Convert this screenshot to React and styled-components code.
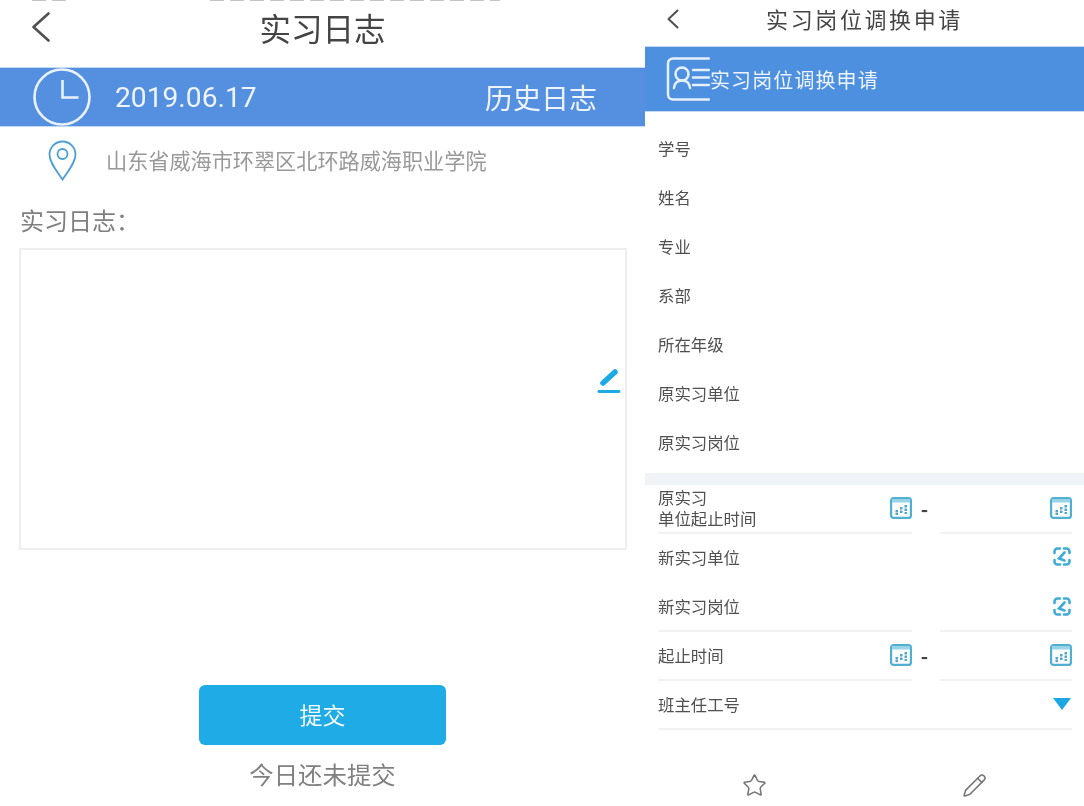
import React from "react";
import styled, { createGlobalStyle } from "styled-components";
import { Star, Pencil } from "lucide-react";

const Global = createGlobalStyle`
  html, body { margin: 0; padding: 0; background: #fff; }
  body { font-family: "Noto Sans CJK SC", "Noto Sans", sans-serif; overflow: hidden; }
`;

const Screen = styled.div`
  width: 1084px;
  height: 806px;
  display: grid;
  grid-template-columns: 645px 439px;
  overflow: hidden;
  filter: blur(0.6px);
`;

const Phone = styled.section`
  display: flex;
  flex-direction: column;
  height: 806px;
  overflow: hidden;
`;

const Header = styled.header`
  position: relative;
  height: ${(p) => p.$h}px;
  display: flex;
  align-items: center;
  justify-content: center;
  color: #444;
  font-size: ${(p) => p.$size}px;
  letter-spacing: ${(p) => p.$spacing || 0}px;
  padding-bottom: ${(p) => p.$lift || 0}px;
  box-sizing: border-box;
`;

const StatusSliver = styled.span`
  position: absolute;
  top: 0;
  left: ${(p) => p.$left}px;
  width: ${(p) => p.$w}px;
  height: 1px;
  background: repeating-linear-gradient(90deg, #c4c4c4 0 14px, #fff 14px 20px);
`;

const Back = styled.span`
  position: absolute;
  left: ${(p) => p.$left}px;
  top: ${(p) => p.$y}px;
  display: flex;
`;

const BlueBand = styled.div`
  height: ${(p) => p.$h}px;
  background: ${(p) => p.$bg};
  border-top: 1px solid #c3d9f3;
  border-bottom: 1px solid #c3d9f3;
  box-sizing: border-box;
  display: flex;
  align-items: center;
  color: #eef4fc;
`;

const DayBand = styled(BlueBand)`
  padding: 0 48px 0 33px;
  font-size: 28px;
  justify-content: space-between;
`;

const DayLeft = styled.div`
  display: flex;
  align-items: center;
  gap: 24px;
`;

const DateText = styled.span`
  font-family: Roboto, "Noto Sans", sans-serif;
  font-size: 28.2px;
`;

const Place = styled.div`
  height: 68px;
  display: flex;
  align-items: center;
  gap: 29px;
  padding: 0 0 2px 48px;
  box-sizing: border-box;
  color: #999;
  font-size: 21.15px;
`;

const PlaceText = styled.span`
  margin-bottom: 2px;
`;

const LogLabel = styled.div`
  margin: 6px 0 0 20px;
  height: 38px;
  line-height: 38px;
  font-size: 24px;
  color: #808080;
`;

const LogBox = styled.div`
  position: relative;
  margin: 9px 18px 0 19px;
  height: 302px;
  box-sizing: border-box;
  border: 2px solid #eeeeee;
  background: #fff;
`;

const EditMark = styled.span`
  position: absolute;
  right: 4px;
  top: 116px;
  display: flex;
`;

const Footer = styled.div`
  margin-top: 135px;
  display: flex;
  flex-direction: column;
  align-items: center;
`;

const Submit = styled.button`
  width: 247px;
  height: 60px;
  border: 0;
  border-radius: 6px;
  background: #1fabe5;
  color: #f4fbff;
  font: inherit;
  font-size: 23px;
  padding: 0 0 2px;
`;

const Status = styled.div`
  margin-top: 11px;
  font-size: 24.4px;
  line-height: 36px;
  color: #808080;
`;

const BandTitle = styled(BlueBand)`
  padding-left: 21px;
  font-size: 20px;
  letter-spacing: 1.1px;
`;

const Fields = styled.div`
  padding-top: 12px;
`;

const InfoRow = styled.div`
  height: 49px;
  display: flex;
  align-items: center;
  padding: 0 0 2px 13px;
  box-sizing: border-box;
  font-size: 16.4px;
  color: #505050;
`;

const Gap = styled.div`
  height: 12px;
  margin-top: 6px;
  background: #f1f4f7;
`;

const SplitRow = styled.div`
  height: 49px;
  margin: 0 12px 0 13px;
  display: grid;
  grid-template-columns: 254px 28px 132px;
  align-items: stretch;
  font-size: 16.4px;
  color: #505050;
`;

const Cell = styled.div`
  display: flex;
  align-items: center;
  justify-content: ${(p) => (p.$end ? "flex-end" : "space-between")};
  box-sizing: border-box;
  border-bottom: 2px solid #f1f1f1;
  padding-bottom: 1px;
`;

const TwoLines = styled.span`
  display: block;
  line-height: 21px;
`;

const Dash = styled.span`
  display: flex;
  align-items: center;
  justify-content: center;
  padding-right: 3px;
  padding-bottom: 3px;
  color: #444;
  font-size: 20px;
  font-weight: 700;
`;

const WideRow = styled.div`
  height: 49px;
  box-sizing: border-box;
  margin: 0 12px 0 13px;
  padding-bottom: 2px;
  display: flex;
  align-items: center;
  justify-content: space-between;
  border-bottom: 2px solid ${(p) => (p.$line ? "#f1f1f1" : "transparent")};
  font-size: 16.4px;
  color: #505050;
`;

const Arrow = styled.span`
  width: 0;
  height: 0;
  margin-right: 1px;
  border-left: 9px solid transparent;
  border-right: 9px solid transparent;
  border-top: 12px solid #1ca6e2;
`;

const Tabs = styled.nav`
  display: grid;
  grid-template-columns: 1fr 1fr;
  justify-items: center;
  padding-top: 43px;
  color: #757575;
`;

const BackArrow = ({ w, h, sw }) => (
  <svg width={w} height={h} viewBox={`0 0 ${w} ${h}`} fill="none" stroke="#505050" strokeWidth={sw} strokeLinecap="round" strokeLinejoin="round">
    <path d={`M${w - 1.5} 1.5L1.5 ${h / 2}L${w - 1.5} ${h - 1.5}`} />
  </svg>
);

const Clock = () => (
  <svg width="58" height="58" viewBox="0 0 58 58" fill="none" stroke="#e9f1fb" strokeWidth="2.6" style={{ margin: "-1px 0" }}>
    <circle cx="29" cy="29" r="27.5" />
    <path d="M29.5 12v17.5h16" />
  </svg>
);

const Pin = () => (
  <svg width="29" height="41" viewBox="0 0 29 41" fill="none" stroke="#4a9fd6" strokeWidth="1.8">
    <path d="M14.5 39.5C9 31 1.5 23 1.5 14.5a13 13 0 0 1 26 0C27.5 23 20 31 14.5 39.5Z" />
    <circle cx="14.5" cy="14" r="5" />
  </svg>
);

const EditIcon = () => (
  <svg width="24" height="28" viewBox="0 0 24 28" fill="none" stroke="#1caae6" strokeLinecap="round">
    <path d="M6 17L18 6" strokeWidth="5.5" />
    <path d="M2 25.5h20" strokeWidth="2.8" />
  </svg>
);

const CardIcon = () => (
  <svg width="44" height="44" viewBox="0 0 44 44" fill="none" stroke="#e6f0fb" strokeWidth="2.5" strokeLinecap="round">
    <path d="M43 1.5H7a5 5 0 0 0-5 5v31a5 5 0 0 0 5 5h36" />
    <circle cx="16" cy="17" r="6.5" />
    <path d="M8 31c.5-5 3.5-7.5 8-7.5s7.5 2.5 8 7.5" />
    <path d="M27 13h16M27 20.5h16M27 28h16" />
  </svg>
);

const Calendar = () => (
  <svg width="22" height="22" viewBox="0 0 22 22" fill="none">
    <rect x="1.1" y="1.1" width="19.8" height="19.8" rx="2.5" stroke="#4fb0d2" strokeWidth="2.2" fill="#fff" />
    <rect x="2" y="2" width="18" height="3.5" fill="#97d4e6" />
    <g fill="#4fa6c8">
      <rect x="5.5" y="13" width="2.5" height="2.5" />
      <rect x="5.5" y="16" width="2.5" height="2" />
      <rect x="10" y="10" width="2.5" height="2.5" />
      <rect x="10" y="13.5" width="2.5" height="2.5" />
      <rect x="14.5" y="8" width="2.5" height="2.5" />
      <rect x="14.5" y="11.5" width="2.5" height="2.5" />
      <rect x="14.5" y="15" width="2.5" height="2" />
    </g>
  </svg>
);

const LinkScan = () => (
  <svg width="18" height="19" viewBox="0 0 18 19" fill="none" stroke="#3fabd6" strokeWidth="2.6" strokeLinecap="round" style={{ marginRight: 1 }}>
    <path d="M1.5 6V4.5a3 3 0 0 1 3-3H7" />
    <path d="M11 1.5h2.500a3 3 0 0 1 3 3V6" />
    <path d="M16.5 13v1.500a3 3 0 0 1-3 3H11" />
    <path d="M7 17.5H4.500a3 3 0 0 1-3-3V13" />
    <path d="M11.5 5.5L6 11.500l5.500 2" />
  </svg>
);

const infoLabels = ["学号", "姓名", "专业", "系部", "所在年级", "原实习单位", "原实习岗位"];

export default function App() {
  return (
    <>
      <Global />
      <Screen>
        <Phone>
          <Header $h={67} $size={31.5} $lift={14}>
            <StatusSliver $left={32} $w={40} />
            <StatusSliver $left={210} $w={290} />
            <Back $left={32} $y={12}>
              <BackArrow w={18} h={30} sw={2.6} />
            </Back>
            实习日志
          </Header>
          <DayBand $h={60} $bg="#5590e0">
            <DayLeft>
              <Clock />
              <DateText>2019.06.17</DateText>
            </DayLeft>
            <span>历史日志</span>
          </DayBand>
          <Place>
            <Pin />
            <PlaceText>山东省威海市环翠区北环路威海职业学院</PlaceText>
          </Place>
          <LogLabel>实习日志：</LogLabel>
          <LogBox>
            <EditMark>
              <EditIcon />
            </EditMark>
          </LogBox>
          <Footer>
            <Submit>提交</Submit>
            <Status>今日还未提交</Status>
          </Footer>
        </Phone>

        <Phone>
          <Header $h={46} $size={22} $spacing={2.6} $lift={10}>
            <Back $left={22} $y={9}>
              <BackArrow w={12} h={20} sw={2} />
            </Back>
            实习岗位调换申请
          </Header>
          <BandTitle $h={66} $bg="#4d90e0">
            <CardIcon />
            实习岗位调换申请
          </BandTitle>
          <Fields>
            {infoLabels.map((l) => (
              <InfoRow key={l}>{l}</InfoRow>
            ))}
          </Fields>
          <Gap />
          <SplitRow>
            <Cell>
              <TwoLines>
                原实习
                <br />
                单位起止时间
              </TwoLines>
              <Calendar />
            </Cell>
            <Dash>-</Dash>
            <Cell $end>
              <Calendar />
            </Cell>
          </SplitRow>
          <WideRow>
            新实习单位
            <LinkScan />
          </WideRow>
          <SplitRow>
            <Cell>新实习岗位</Cell>
            <span />
            <Cell $end>
              <LinkScan />
            </Cell>
          </SplitRow>
          <SplitRow>
            <Cell>
              起止时间
              <Calendar />
            </Cell>
            <Dash>-</Dash>
            <Cell $end>
              <Calendar />
            </Cell>
          </SplitRow>
          <WideRow $line>
            班主任工号
            <Arrow />
          </WideRow>
          <Tabs>
            <Star size={25} strokeWidth={1.5} />
            <Pencil size={25} strokeWidth={1.5} />
          </Tabs>
        </Phone>
      </Screen>
    </>
  );
}
